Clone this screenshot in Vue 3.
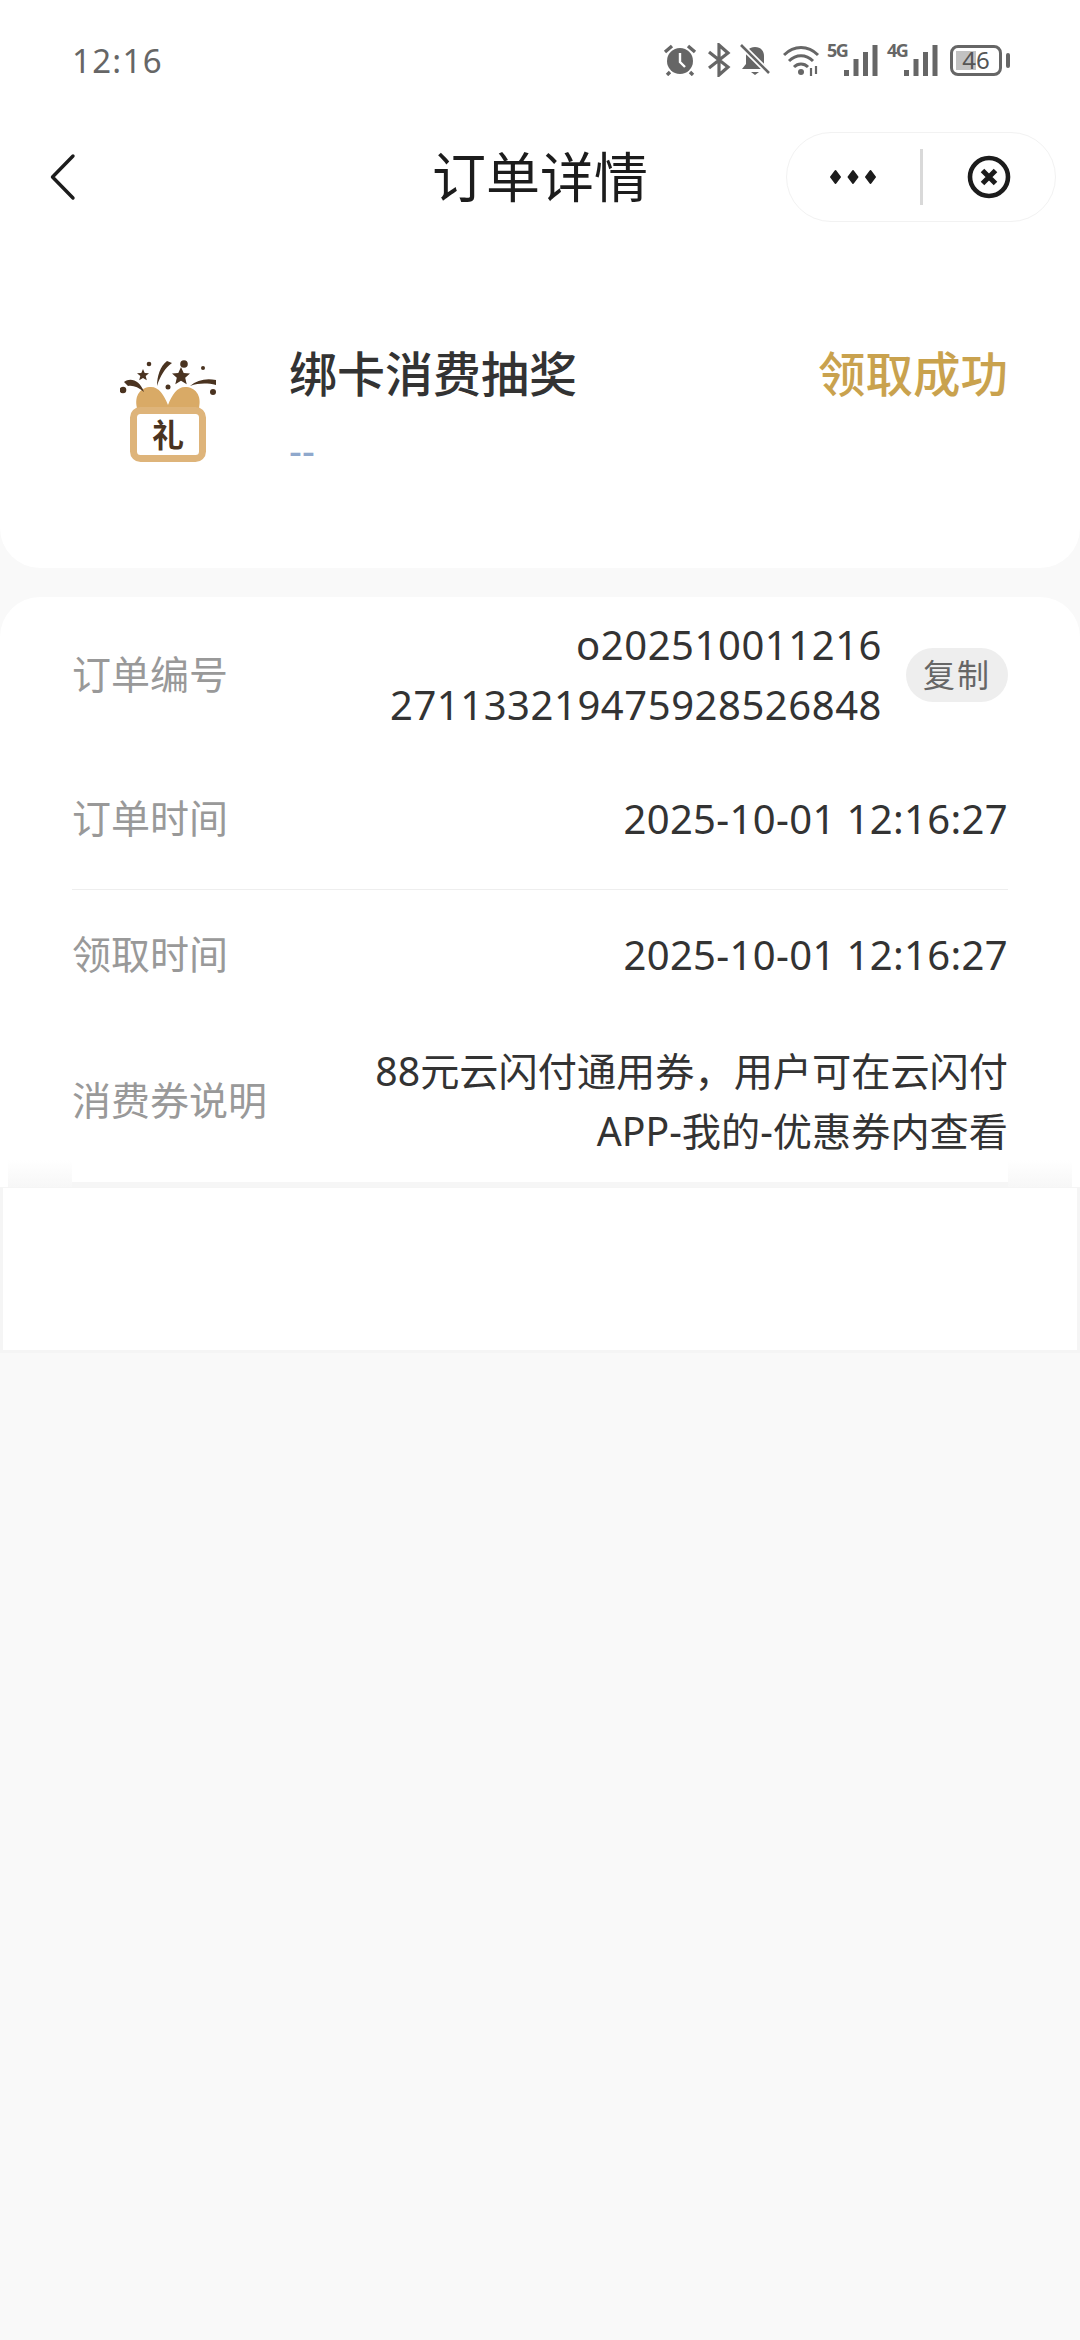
<script setup>
const rows = [
  { label: '订单时间', value: '2025-10-01 12:16:27', line: true },
  { label: '领取时间', value: '2025-10-01 12:16:27' },
]
</script>

<template>
  <div class="page">
    <section class="top-card">
      <div class="status">
        <span class="time">12:16</span>
        <div class="status-icons">
          <!-- alarm -->
          <svg width="34" height="32" viewBox="0 0 34 32" class="ic-alarm">
            <circle cx="17" cy="17" r="13" fill="#666" />
            <path d="M17 9v9l5 5" fill="none" stroke="#fff" stroke-width="2.4" />
            <path d="M2 8l7-6M32 8l-7-6M7 28l-3 3M27 28l3 3" stroke="#666" stroke-width="3.4" fill="none" />
          </svg>
          <!-- bluetooth -->
          <svg width="24" height="34" viewBox="0 0 24 34" class="ic-bt">
            <path d="M2 9l19 15-9 8V2l9 8L2 25" fill="none" stroke="#666" stroke-width="3.2" />
          </svg>
          <!-- muted bell -->
          <svg width="32" height="32" viewBox="0 0 32 32" class="ic-bell">
            <path d="M16 3c6 0 9 4 9 9v8l4 5H3l4-5v-8c0-5 3-9 9-9zM12 28h8l-4 3z" fill="#666" />
            <path d="M2 1l28 28" stroke="#fff" stroke-width="6" />
            <path d="M2 1l28 28" stroke="#666" stroke-width="2.6" />
          </svg>
          <!-- wifi -->
          <svg width="38" height="32" viewBox="0 0 38 32" class="ic-wifi">
            <path d="M1 11c10-10 24-10 34 0M6 17c7-7 17-7 24 0M11 23c4-4 10-4 14 0" fill="none" stroke="#666" stroke-width="3" />
            <circle cx="18" cy="28" r="3" fill="#666" />
            <path d="M28 24v8M33 22v8" stroke="#666" stroke-width="2.2" />
          </svg>
          <span class="net">5G</span>
          <svg width="34" height="32" viewBox="0 0 34 32" class="ic-sig">
            <path d="M2.500 26v6M12 15v17M21.500 8v24M31 1v31" stroke="#666" stroke-width="5" />
          </svg>
          <span class="net net-second">4G</span>
          <svg width="34" height="32" viewBox="0 0 34 32" class="ic-sig">
            <path d="M2.500 26v6M12 15v17M21.500 8v24M31 1v31" stroke="#666" stroke-width="5" />
          </svg>
          <div class="battery">
            <div class="battery-fill"></div>
            <span class="battery-num">46</span>
          </div>
          <div class="battery-nub"></div>
        </div>
      </div>

      <header class="nav">
        <svg class="back" width="28" height="48" viewBox="0 0 28 48">
          <path d="M23 3L2.500 24 23 45" fill="none" stroke="#1c1c1c" stroke-width="3.4" stroke-linecap="round" stroke-linejoin="round" />
        </svg>
        <h1 class="nav-title">订单详情</h1>
        <div class="capsule">
          <div class="capsule-half">
            <svg width="48" height="16" viewBox="0 0 48 16">
              <path d="M6.500 2l4.500 6-4.500 6L2 8zM24 2l4.500 6L24 14l-4.500-6zM41.500 2L46 8l-4.500 6L37 8z" fill="#1c1c1c" stroke="#1c1c1c" stroke-width="2" stroke-linejoin="round" />
            </svg>
          </div>
          <div class="capsule-line"></div>
          <div class="capsule-half">
            <svg width="44" height="44" viewBox="0 0 44 44">
              <circle cx="22" cy="22" r="19" fill="none" stroke="#1c1c1c" stroke-width="4.6" />
              <path d="M15.500 15.500l13 13M28.500 15.500l-13 13" stroke="#1c1c1c" stroke-width="5" />
            </svg>
          </div>
        </div>
      </header>

      <div class="summary">
        <svg class="gift" width="100" height="120" viewBox="0 0 100 120">
          <path d="M17 58c-3-13 4-21 14-21 8 0 13 8 17 18 4-10 9-18 17-18 10 0 17 8 14 21z" fill="#d9aa66" />
          <rect x="13.500" y="60.500" width="69" height="48" rx="7" fill="#fff" stroke="#deb47a" stroke-width="7" />
          <text x="48" y="97" text-anchor="middle" class="gift-char">礼</text>
          <g fill="#4a3320">
            <circle cx="3" cy="40" r="3.300" />
            <circle cx="29" cy="14" r="2.300" />
            <circle cx="64" cy="14" r="3.800" />
            <circle cx="83" cy="18" r="2" />
            <circle cx="93" cy="42" r="3" />
            <circle cx="48" cy="37" r="2.500" />
            <path d="M4 32c7-5 16-1 20 10-6-5-11-7-16-6zM37 36c0-9 3-20 10-25l5 2c-7 5-12 13-15 23zM70 36c7-6 16-8 26-6v5c-9-2-17-2-26 1z" />
            <path d="M23 19l1.700 4 4.300.3-3.300 2.800 1.100 4.200-3.800-2.300-3.800 2.300 1.100-4.200-3.300-2.800 4.300-.3zM61 17l2.700 6 6.300.6-4.800 4.200 1.500 6.400-5.700-3.400-5.700 3.400 1.500-6.400-4.800-4.200 6.300-.6z" />
          </g>
        </svg>
        <div class="summary-text">
          <div class="summary-title">绑卡消费抽奖</div>
          <div class="summary-sub">--</div>
        </div>
        <div class="summary-state">领取成功</div>
      </div>
    </section>

    <section class="detail-card">
      <div class="row row-order">
        <span class="label">订单编号</span>
        <span class="value num">o202510011216<br />271133219475928526848</span>
        <span class="copy">复制</span>
      </div>
      <div
        v-for="row in rows"
        :key="row.label"
        class="row row-plain"
        :class="{ 'row-line': row.line }"
      >
        <span class="label">{{ row.label }}</span>
        <span class="value num date">{{ row.value }}</span>
      </div>
      <div class="row row-desc">
        <span class="label">消费券说明</span>
        <span class="value desc">88元云闪付通用券，用户可在云闪付<br />APP-我的-优惠券内查看</span>
      </div>
      <div class="card-foot">
        <div class="foot-fade"></div>
        <div class="foot-mid"></div>
        <div class="foot-fade"></div>
      </div>
    </section>

    <div class="blank-box"></div>
  </div>
</template>

<style scoped>
.page {
  min-height: 2340px;
  background: #f9f9f9;
  font-family: "Noto Sans", "Noto Sans CJK SC", sans-serif;
  color: #333;
}
.top-card {
  height: 568px;
  background: #fff;
  border-radius: 0 0 40px 40px;
}
.status {
  height: 120px;
  box-sizing: border-box;
  padding: 0 70px 0 72px;
  display: flex;
  align-items: center;
  justify-content: space-between;
}
.time {
  font-size: 33px;
  color: #666;
  letter-spacing: 1.300px;
}
.status-icons {
  display: flex;
  align-items: center;
}
.ic-alarm { margin-right: 10px; }
.ic-bt { margin-right: 8px; }
.ic-bell { margin-right: 12px; }
.ic-wifi { margin-right: 6px; }
.net {
  align-self: flex-start;
  margin-top: -5px;
  font-size: 18px;
  font-weight: 700;
  letter-spacing: -1.500px;
  color: #666;
  width: 17px;
}
.net-second { margin-left: 9px; }
.battery {
  position: relative;
  margin-left: 12px;
  box-sizing: border-box;
  width: 52px;
  height: 31px;
  border: 3px solid #666;
  border-radius: 8px;
  display: flex;
  align-items: center;
  justify-content: center;
  overflow: hidden;
}
.battery-fill {
  position: absolute;
  left: 3px;
  top: 3px;
  bottom: 3px;
  width: 20px;
  background: #c2c2c2;
}
.battery-num {
  position: relative;
  font-size: 24px;
  line-height: 1;
  color: #555;
}
.battery-nub {
  margin-left: 4px;
  width: 4px;
  height: 15px;
  border-radius: 2px;
  background: #666;
}
.nav {
  position: relative;
  height: 114px;
  box-sizing: border-box;
  padding: 0 24px 0 50px;
  display: flex;
  align-items: center;
  justify-content: space-between;
}
.nav-title {
  position: absolute;
  left: 0;
  right: 0;
  top: 0;
  margin: 0;
  text-align: center;
  font-size: 54px;
  line-height: 114px;
  font-weight: 400;
  color: #1c1c1c;
}
.capsule {
  position: relative;
  box-sizing: border-box;
  width: 270px;
  height: 90px;
  border: 1px solid #f2f2f2;
  border-radius: 45px;
  display: flex;
  align-items: center;
}
.capsule-half {
  flex: 1;
  display: flex;
  justify-content: center;
}
.capsule-line {
  width: 3px;
  height: 56px;
  background: #d9d9d9;
}
.summary {
  display: flex;
  align-items: flex-start;
  padding: 116px 72px 0 120px;
}
.gift { flex-shrink: 0; }
.gift-char {
  font-family: "Noto Sans CJK SC", sans-serif;
  font-size: 32px;
  font-weight: 700;
  fill: #4a3320;
}
.summary-text {
  margin-left: 69px;
  flex: 1;
}
.summary-title {
  font-size: 48px;
  line-height: 66px;
  margin-top: -9px;
  font-weight: 500;
  color: #333;
}
.summary-sub {
  margin-top: 21px;
  font-size: 40px;
  line-height: 44px;
  color: #8fa8cc;
}
.summary-state {
  font-size: 47.500px;
  line-height: 66px;
  margin-top: -9px;
  font-weight: 500;
  color: #c9a24e;
}
.detail-card {
  margin-top: 29px;
  height: 590px;
  box-sizing: border-box;
  padding: 0 72px;
  background: #fff;
  border-radius: 40px 40px 0 0;
}
.row {
  display: flex;
  align-items: center;
}
.label {
  margin-top: -6px;
  font-size: 39px;
  color: #999;
  white-space: nowrap;
}
.value {
  flex: 1;
  text-align: right;
  font-size: 39.500px;
  line-height: 60px;
  color: #333;
  white-space: nowrap;
}
.num {
  font-size: 40px;
  letter-spacing: 0.550px;
}
.date {
  letter-spacing: 0.350px;
}
.desc {
  font-size: 39.200px;
}
.row-order {
  padding-top: 18px;
  height: 120px;
}
.copy {
  margin-left: 24px;
  width: 102px;
  height: 54px;
  border-radius: 27px;
  background: #eee;
  color: #666;
  font-size: 32px;
  line-height: 54px;
  text-align: center;
  letter-spacing: 2px;
}
.row-plain {
  height: 132px;
  box-sizing: border-box;
  padding-bottom: 2px;
}
.row-line {
  height: 155px;
  padding-top: 14px;
  padding-bottom: 0;
  border-bottom: 1px solid #eee;
}
.row-desc {
  height: 158px;
}
/* shaded edge along the bottom of the card */
.card-foot {
  display: flex;
  align-items: flex-end;
  height: 27px;
  margin: -20px -64px 0;
}
.foot-fade {
  width: 64px;
  height: 27px;
  background: linear-gradient(#fff, #f7f7f7);
}
.foot-mid {
  flex: 1;
  height: 5px;
  background: #f6f6f6;
}
.blank-box {
  height: 166px;
  box-sizing: border-box;
  border: 3px solid #f5f5f5;
  border-top-width: 1px;
  background: #fff;
}
</style>

<style>
body {
  background: #f9f9f9;
}
</style>
